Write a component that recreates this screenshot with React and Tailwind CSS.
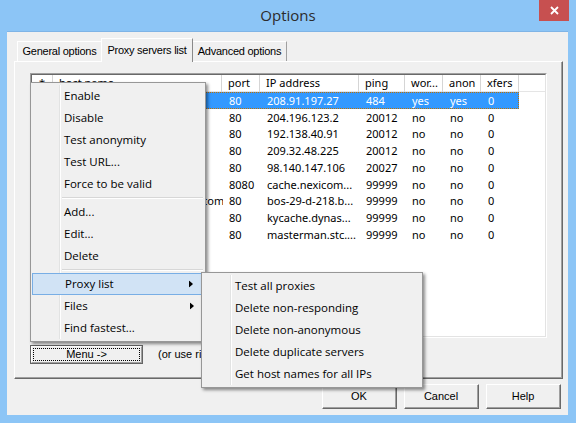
import { useState } from "react";

const rows = [
  { host: "", port: "80", ip: "208.91.197.27", ping: "484", works: "yes", anon: "yes", xfers: "0" },
  { host: "", port: "80", ip: "204.196.123.2", ping: "20012", works: "no", anon: "no", xfers: "0" },
  { host: "", port: "80", ip: "192.138.40.91", ping: "20012", works: "no", anon: "no", xfers: "0" },
  { host: "", port: "80", ip: "209.32.48.225", ping: "20012", works: "no", anon: "no", xfers: "0" },
  { host: "", port: "80", ip: "98.140.147.106", ping: "20027", works: "no", anon: "no", xfers: "0" },
  { host: "", port: "8080", ip: "cache.nexicom...", ping: "99999", works: "no", anon: "no", xfers: "0" },
  { host: "bos-29-d-218.bos.a.verizon.com", port: "80", ip: "bos-29-d-218.b...", ping: "99999", works: "no", anon: "no", xfers: "0" },
  { host: "", port: "80", ip: "kycache.dynas...", ping: "99999", works: "no", anon: "no", xfers: "0" },
  { host: "", port: "80", ip: "masterman.stc....", ping: "99999", works: "no", anon: "no", xfers: "0" },
];

const headers = ["*", "host name", "port", "IP address", "ping", "wor...", "anon", "xfers"];

const mainMenu = [
  "Enable",
  "Disable",
  "Test anonymity",
  "Test URL...",
  "Force to be valid",
  "-",
  "Add...",
  "Edit...",
  "Delete",
  "-",
  "Proxy list>",
  "Files>",
  "Find fastest...",
];

const subMenu = [
  "Test all proxies",
  "Delete non-responding",
  "Delete non-anonymous",
  "Delete duplicate servers",
  "Get host names for all IPs",
];

const uiFont = "font-['Liberation_Sans',Arial,sans-serif]";
const menuFont = "font-['Open_Sans','Noto_Sans',sans-serif]";

function Tab({ label, active }) {
  if (active) {
    return (
      <div className="relative z-10 -mx-[1px] -mb-px flex h-[24px] w-[92px] items-start justify-center whitespace-nowrap border-l border-r border-t border-l-white border-r-[#8a8a8a] border-t-white bg-[#f0f0f0] pt-[3px] text-[11px] tracking-[-0.25px] text-black">
        {label}
      </div>
    );
  }
  return (
    <div className="flex h-[20px] items-center justify-center whitespace-nowrap border-l border-r border-t border-l-white border-r-[#a0a0a0] border-t-white bg-[#f0f0f0] text-[11px] tracking-[-0.25px] text-black">
      {label}
    </div>
  );
}

function ProxyList() {
  const cols = "grid grid-cols-[21px_169px_38px_99px_46px_38px_38px_38px]";
  return (
    <div className="h-[265px] w-[517px] border-l border-t border-l-[#a0a0a0] border-t-[#a0a0a0] border-r border-b border-r-white border-b-white">
      <div className="h-full w-full border-l border-t border-l-[#696969] border-t-[#696969] border-r border-b border-r-[#e3e3e3] border-b-[#e3e3e3] bg-white">
        <div className={`${cols} h-[17px] border-b border-[#e5e5e5]`}>
          {headers.map((h, i) => (
            <div
              key={h}
              className={`flex items-center border-r border-[#d5d5d5] text-[11px] text-black ${i === 0 ? "justify-center" : "pl-[6px]"}`}
            >
              {h}
            </div>
          ))}
        </div>
        {rows.map((r, i) => {
          const sel = i === 0;
          return (
            <div
              key={i}
              className={`${cols} h-[16.75px] w-[487px] text-[11px] leading-none ${sel ? "border border-dotted border-[#c07000] bg-[#3399ff] text-white" : "border border-transparent text-black"}`}
            >
              <div />
              <div className="flex items-center overflow-hidden whitespace-nowrap pl-[6px]">{r.host}</div>
              <div className="flex items-center pl-[6px]">{r.port}</div>
              <div className="flex items-center whitespace-nowrap pl-[6px]">{r.ip}</div>
              <div className="flex items-center pl-[6px]">{r.ping}</div>
              <div className="flex items-center pl-[6px]">{r.works}</div>
              <div className="flex items-center pl-[6px]">{r.anon}</div>
              <div className="flex items-center pl-[6px]">{r.xfers}</div>
            </div>
          );
        })}
      </div>
    </div>
  );
}

function Button({ label }) {
  return (
    <div className="h-[25px] w-[75px] border-l border-t border-l-white border-t-white border-r border-b border-r-[#696969] border-b-[#696969]">
      <div className={`flex h-full w-full items-center justify-center border-r border-b border-r-[#a0a0a0] border-b-[#a0a0a0] bg-[#f0f0f0] text-[11px] text-black ${uiFont}`}>
        {label}
      </div>
    </div>
  );
}

function Arrow() {
  return (
    <svg width="4" height="7" viewBox="0 0 4 7" className="absolute right-[10px] top-1/2 -translate-y-1/2">
      <path d="M0 0 L4 3.5 L0 7 Z" fill="#000" />
    </svg>
  );
}

function Menu({ items, className, highlight }) {
  return (
    <div className={`absolute z-30 border border-[#979797] bg-[#f0f0f0] py-[2px] shadow-[2px_2px_3px_rgba(0,0,0,0.45)] ${menuFont} ${className}`}>
      <div className="pointer-events-none absolute bottom-[2px] left-[28px] top-[2px] w-[2px] border-l border-r border-l-[#e2e3e3] border-r-white" />
      {items.map((it, i) => {
        if (it === "-") {
          return (
            <div key={i} className="flex h-[6px] items-center pl-[31px] pr-[2px]">
              <div className="h-[2px] w-full border-b border-t border-b-white border-t-[#d7d7d7]" />
            </div>
          );
        }
        const sub = it.endsWith(">");
        const label = sub ? it.slice(0, -1) : it;
        const hl = highlight === label;
        return (
          <div key={i} className="relative h-[22px] px-[1px]">
            <div
              className={`relative flex h-full items-center whitespace-nowrap pl-[32px] text-[11.5px] text-black ${hl ? "border border-[#78aee5] bg-[#d1e3f5] pl-[31px]" : ""}`}
            >
              {label}
              {sub && <Arrow />}
            </div>
          </div>
        );
      })}
    </div>
  );
}

export default function App() {
  const [tab] = useState("Proxy servers list");

  return (
    <div className="relative flex h-[423px] w-[576px] flex-col overflow-hidden bg-[#8cc5f6]">
      {/* title bar */}
      <div className="relative flex h-[31px] items-center justify-center">
        <span className="font-['Open_Sans','Noto_Sans',sans-serif] text-[15px] text-[#2b2b2b]">Options</span>
        <div className="absolute right-[7px] top-0 flex h-[21px] w-[30px] items-center justify-center bg-[#c75050]">
          <svg width="9" height="9" viewBox="0 0 9 9">
            <path d="M1 1 L8 8 M8 1 L1 8" stroke="#fff" strokeWidth="1.8" />
          </svg>
        </div>
      </div>

      {/* client area */}
      <div className="mb-[8px] ml-[7px] mr-[8px] flex flex-1 flex-col border-t border-[#7fb4e6] bg-[#f0f0f0] px-[7px] pt-[6px]">
        <div className={`flex h-[23px] items-end pl-[3px] ${uiFont}`}>
          <div className="w-[85px]">
            <Tab label="General options" />
          </div>
          <Tab label="Proxy servers list" active={tab === "Proxy servers list"} />
          <div className="w-[95px]">
            <Tab label="Advanced options" />
          </div>
        </div>

        <div className="h-[318px] w-[549px] border-l border-t border-l-white border-t-white border-r border-b border-r-[#696969] border-b-[#696969]">
          <div className="h-full w-full border-r border-b border-r-[#a0a0a0] border-b-[#a0a0a0] pl-[15px] pt-[11px]">
            <ProxyList />
            <div className={`mt-[7px] flex items-center ${uiFont}`}>
              <div className="h-[19px] w-[113px] border border-[#646464]">
                <div className="h-full w-full border-l border-t border-l-white border-t-white border-r border-b border-r-[#a0a0a0] border-b-[#a0a0a0] bg-[#f0f0f0] p-[1px]">
                  <div className="flex h-full w-full items-center justify-center border border-dotted border-black text-[11px] text-black">
                    Menu -&gt;
                  </div>
                </div>
              </div>
              <span className="ml-[15px] text-[11px] text-black">(or use right-click on the list)</span>
            </div>
          </div>
        </div>

        <div className="mt-[5px] flex justify-end gap-[7px]">
          <Button label="OK" />
          <Button label="Cancel" />
          <Button label="Help" />
        </div>
      </div>

      <Menu items={mainMenu} highlight="Proxy list" className="left-[30px] top-[82px] w-[176px]" />
      <Menu items={subMenu} className="left-[201px] top-[272px] w-[222px]" />
    </div>
  );
}
